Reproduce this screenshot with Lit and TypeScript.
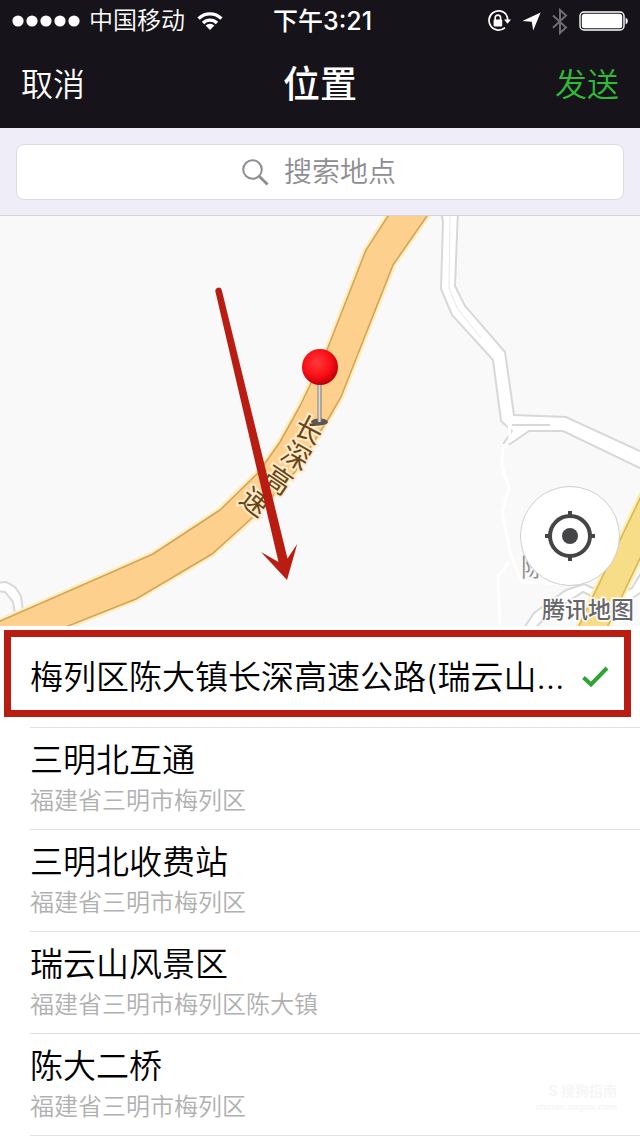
import { LitElement, html, svg, css } from "lit";
import { customElement, property, state } from "lit/decorators.js";

interface Place {
  name: string;
  address?: string;
}

const PLACES: Place[] = [
  { name: "梅列区陈大镇长深高速公路(瑞云山…" },
  { name: "三明北互通", address: "福建省三明市梅列区" },
  { name: "三明北收费站", address: "福建省三明市梅列区" },
  { name: "瑞云山风景区", address: "福建省三明市梅列区陈大镇" },
  { name: "陈大二桥", address: "福建省三明市梅列区" },
];

@customElement("status-bar")
class StatusBar extends LitElement {
  static styles = css`
    :host {
      display: grid;
      grid-template-columns: 1fr auto 1fr;
      align-items: center;
      height: 42px;
      padding: 0 11px 0 12px;
      background: #16131a;
      color: #fff;
      font-size: 24px;
      line-height: 42px;
    }
    .side {
      display: flex;
      align-items: center;
    }
    .carrier {
      margin: 0 12px 0 8px;
    }
    .time {
      padding-left: 4px;
      font-size: 25px;
      font-weight: 500;
    }
    .end {
      justify-content: flex-end;
      gap: 11px;
    }
    svg {
      display: block;
    }
  `;

  render() {
    return html`
      <div class="side">
        <svg width="69" height="12" viewBox="0 0 69 12" fill="#fff" aria-hidden="true">
          ${[6, 20, 34, 48, 62].map((x) => svg`<circle cx=${x} cy="6" r="5.6" />`)}
        </svg>
        <span class="carrier">中国移动</span>
        <svg width="26" height="20" viewBox="0 0 26 20" fill="none" stroke="#fff" stroke-width="3.4" aria-hidden="true">
          <path d="M1.6 7.6a16 16 0 0 1 22.8 0" />
          <path d="M6 12a10 10 0 0 1 14 0" />
          <path d="M8.6 14.6a6.3 6.3 0 0 1 8.8 0L13 19z" fill="#fff" stroke="none" />
        </svg>
      </div>
      <span class="time">下午3:21</span>
      <div class="side end">
        <svg width="24" height="22" viewBox="0 0 24 22" fill="none" stroke="#fff" aria-hidden="true">
          <path d="M19.2 4.6A9.6 9.6 0 1 0 18 17.6M19.2 4.6a9.6 9.6 0 0 1 1.4 5.4" stroke-width="1.7" />
          <path d="M17 9.6h7l-3.5 4.2z" fill="#fff" stroke="none" />
          <rect x="6.6" y="9.6" width="8.6" height="6.8" rx="1" fill="#fff" stroke="none" />
          <path d="M8.2 10V7.8a2.7 2.7 0 0 1 5.4 0V10" stroke-width="1.6" />
        </svg>
        <svg width="19" height="19" viewBox="0 0 19 19" fill="#fff" aria-hidden="true">
          <path d="M18.6.4 11.2 18.6 9.8 9.8.4 9z" />
        </svg>
        <svg width="16" height="27" viewBox="0 0 16 27" fill="none" stroke="#6f6d73" stroke-width="2" aria-hidden="true">
          <path d="M1 7.4 14 19.4 8 25V2l6 5.6L1 19.8" />
        </svg>
        <svg width="50" height="20" viewBox="0 0 50 20" aria-hidden="true">
          <rect x="1" y="1" width="44" height="18" rx="4" fill="none" stroke="#fff" stroke-width="1.4" />
          <rect x="2.8" y="2.8" width="40.4" height="14.4" rx="2.5" fill="#fff" />
          <path d="M46.6 6.4a4 4 0 0 1 0 7.2z" fill="#fff" />
        </svg>
      </div>
    `;
  }
}

@customElement("location-map")
class LocationMap extends LitElement {
  static styles = css`
    :host {
      display: block;
      position: relative;
      height: 410px;
      background: #f9f9f9;
      overflow: hidden;
    }
    .canvas {
      display: block;
      width: 100%;
      height: 100%;
    }
    .minor {
      fill: #fff;
      stroke: #d8d8d8;
      stroke-width: 2;
    }
    .lane {
      fill: none;
      stroke: #fff;
      stroke-width: 3;
      stroke-linejoin: round;
    }
    .edge {
      fill: none;
      stroke: #d8d8d8;
      stroke-width: 2;
    }
    .centre {
      fill: none;
      stroke: #e6e6e6;
      stroke-width: 1;
    }
    .road-label {
      font-size: 28px;
      font-weight: 400;
      fill: #6b4415;
      stroke: #fdeccb;
      stroke-width: 4;
      paint-order: stroke;
      text-anchor: middle;
    }
    .place-label {
      font-size: 25px;
      fill: #8c8c8c;
    }
    .brand {
      font-size: 23px;
      font-weight: 500;
      fill: #66666a;
      stroke: #fff;
      stroke-width: 3;
      paint-order: stroke;
    }
    .locate {
      position: absolute;
      right: 20px;
      bottom: 40px;
      width: 100px;
      height: 100px;
      padding: 0;
      border: 1px solid #cfcfcf;
      border-radius: 50%;
      background: #fff;
      display: grid;
      place-items: center;
    }
  `;

  render() {
    const label = [
      { ch: "长", x: 309, y: 430, turn: 28 },
      { ch: "深", x: 296, y: 456, turn: 30 },
      { ch: "高", x: 278, y: 480, turn: 34 },
      { ch: "速", x: 255, y: 502, turn: 38 },
    ];
    return html`
      <svg class="canvas" viewBox="0 216 640 410" preserveAspectRatio="xMidYMid slice" role="img" aria-label="地图">
        <defs>
          <radialGradient id="ball" cx="0.42" cy="0.38" r="0.62">
            <stop offset="0" stop-color="#ff3a3a" />
            <stop offset="0.65" stop-color="#f80d14" />
            <stop offset="1" stop-color="#bd0008" />
          </radialGradient>
          <linearGradient id="needle">
            <stop offset="0" stop-color="#858585" />
            <stop offset="0.5" stop-color="#dcdcdc" />
            <stop offset="1" stop-color="#777" />
          </linearGradient>
        </defs>

        <path class="minor" d="M-4 583 6 582 15 587 21 596 24 620H16L13 602 5 592-4 591z" />

        <path
          class="minor"
          d="M441 210 443 222 441 289 452 315 493 360 501 421 512 431 504 443 510 444 529 431 563 431 644 470V453L566 417 514 415 505 352 465 306 455 286 458 210z"
        />
        <path class="edge" d="M512 425h38" />
        <path class="centre" d="M450 216l-1 72 8 20 24 30" />
        <path class="lane" d="M509 418l1 22-7 8-1 18 7 22-7 24 9 44 11 26 48 2M509 562l-11 14 2 52" />
        <path class="minor" d="M524 628 534 613 566 590 584 584 608 595 622 593 632 588 644 568V640H536z" />
        <path d="M535 628 550 613 583 592 600 600 630 600 644 590V640z" fill="#f9f9f9" stroke="#d8d8d8" stroke-width="2" />

        <path
          d="M392 210 388 216 366 250 327 350 300 406 280 442 258 473 220 510 153 554 110 573 -4 623V640H30L68 626 136 599 212 554 252 518 295 472 330 416 341 397 393 265 427 216 432 210z"
          fill="#fed08d"
          stroke="#ffedbd"
          stroke-width="6"
        />
        <path
          d="M392 210 388 216 366 250 327 350 300 406 280 442 258 473 220 510 153 554 110 573 -4 623V640H30L68 626 136 599 212 554 252 518 295 472 330 416 341 397 393 265 427 216 432 210z"
          fill="#fed08d"
          stroke="#d0a55c"
          stroke-width="1.6"
        />
        <path d="M644 490 574 636H603L644 550z" fill="#f7dd88" stroke="#fff0ae" stroke-width="6" />
        <path d="M644 490 574 636H603L644 550z" fill="#f7dd88" stroke="#d8b75c" stroke-width="1.6" />

        ${label.map(
          (l) => svg`<text class="road-label" transform="translate(${l.x} ${l.y}) rotate(${l.turn})" y="10">${l.ch}</text>`
        )}
        <text class="place-label" x="521" y="576">陈</text>
        <text class="brand" x="542" y="618">腾讯地图</text>

        <ellipse cx="319.5" cy="422" rx="8.5" ry="3.5" fill="#5d5650" />
        <rect x="317.5" y="382" width="4" height="40" fill="url(#needle)" />
        <circle cx="320" cy="367" r="18" fill="url(#ball)" />

        <path
          d="M215.4 291.5a3.2 3.2 0 0 1 6.4-1.2L287.5 558.5 297.2 544 287 580 261 552 278.5 562z"
          fill="#b91c10"
        />
      </svg>
      <button class="locate" aria-label="定位">
        <svg width="50" height="50" viewBox="0 0 50 50" fill="none" stroke="#454447" stroke-width="4" aria-hidden="true">
          <circle cx="25" cy="25" r="20" />
          <circle cx="25" cy="25" r="8" fill="#454447" stroke="none" />
          <path d="M25 0v6M25 44v6M0 25h6M44 25h6" />
        </svg>
      </button>
    `;
  }
}

@customElement("place-row")
class PlaceRow extends LitElement {
  @property({ attribute: false }) place!: Place;
  @property({ type: Boolean }) selected = false;

  static styles = css`
    :host {
      display: block;
      padding-left: 30px;
    }
    .row {
      display: flex;
      align-items: center;
      justify-content: space-between;
      box-sizing: border-box;
      width: 100%;
      min-height: 102px;
      padding: 10px 31px 9px 0;
      border: 0;
      border-bottom: 1px solid #e2e2e4;
      background: none;
      font: inherit;
      text-align: left;
      color: #000;
    }
    .text {
      min-width: 0;
    }
    .name,
    .address {
      display: block;
      white-space: nowrap;
      overflow: hidden;
    }
    .name {
      font-size: 33px;
      line-height: 44px;
    }
    .address {
      font-size: 24px;
      line-height: 38px;
      color: #b0b0b0;
    }
    .tick {
      flex: none;
    }
  `;

  render() {
    return html`
      <button class="row" aria-pressed=${this.selected ? "true" : "false"}>
        <span class="text">
          <span class="name">${this.place.name}</span>
          ${this.place.address ? html`<span class="address">${this.place.address}</span>` : ""}
        </span>
        ${this.selected
          ? html`<svg class="tick" width="28" height="22" viewBox="0 0 28 22" fill="none" stroke="#2fa336" stroke-width="4" aria-hidden="true">
              <path d="M2.5 11.5 10 18.5 26 2" />
            </svg>`
          : ""}
      </button>
    `;
  }
}

@customElement("app-root")
class AppRoot extends LitElement {
  @state() private selected = 0;

  static styles = css`
    :host {
      display: block;
      position: relative;
      background: #fff;
      font-family: Inter, "Noto Sans CJK SC", sans-serif;
      font-weight: 350;
    }
    .nav {
      display: grid;
      grid-template-columns: 1fr auto 1fr;
      align-items: center;
      height: 86px;
      padding: 0 21px;
      background: #16131a;
      color: #fff;
    }
    .action {
      justify-self: start;
      padding: 0;
      border: 0;
      background: none;
      font: inherit;
      font-size: 32px;
      line-height: 48px;
      color: #fff;
    }
    .send {
      justify-self: end;
      color: #2fbb35;
    }
    .title {
      margin: 0;
      font-size: 37px;
      font-weight: 500;
      line-height: 52px;
    }
    .search {
      padding: 16px 16px 15px;
      border-bottom: 1px solid #d5d4da;
      background: #efeef8;
    }
    .field {
      display: flex;
      align-items: center;
      justify-content: center;
      gap: 15px;
      box-sizing: border-box;
      height: 56px;
      border: 1px solid #dcdbe0;
      border-radius: 8px;
      background: #fff;
    }
    .input {
      width: 114px;
      padding: 0;
      border: 0;
      outline: 0;
      background: none;
      font: inherit;
      font-size: 28px;
      line-height: 40px;
      color: #222;
    }
    .input::placeholder {
      color: #8e8d93;
      opacity: 1;
    }
    .list {
      margin: 0;
      padding: 0;
      list-style: none;
    }
    .item {
      position: relative;
    }
    .marker {
      position: absolute;
      inset: 4px 9px 11px 4px;
      border: 7px solid #b91c10;
      pointer-events: none;
    }
    .watermark {
      position: absolute;
      right: 23px;
      bottom: 22px;
      display: grid;
      justify-items: end;
      color: #f6f6f6;
      font-size: 14px;
      font-weight: 700;
      line-height: 18px;
      pointer-events: none;
    }
    .site {
      font-size: 9px;
      line-height: 14px;
    }
  `;

  render() {
    return html`
      <status-bar></status-bar>
      <header class="nav">
        <button class="action">取消</button>
        <h1 class="title">位置</h1>
        <button class="action send">发送</button>
      </header>
      <div class="search">
        <label class="field">
          <svg width="27" height="27" viewBox="0 0 27 27" fill="none" stroke="#8e8d93" aria-hidden="true">
            <circle cx="10.5" cy="10.5" r="9.3" stroke-width="2" />
            <path d="M17.2 17.2 25.6 25.6" stroke-width="2.8" />
          </svg>
          <input class="input" type="text" placeholder="搜索地点" aria-label="搜索地点" />
        </label>
      </div>
      <location-map></location-map>
      <ul class="list">
        ${PLACES.map(
          (place, i) => html`
            <li class="item" @click=${() => (this.selected = i)}>
              <place-row .place=${place} ?selected=${i === this.selected}></place-row>
              ${i === 0 ? html`<div class="marker"></div>` : ""}
            </li>
          `
        )}
      </ul>
      <div class="watermark" aria-hidden="true">
        <span>S 搜狗指南</span>
        <span class="site">zhinan.sogou.com</span>
      </div>
    `;
  }
}
